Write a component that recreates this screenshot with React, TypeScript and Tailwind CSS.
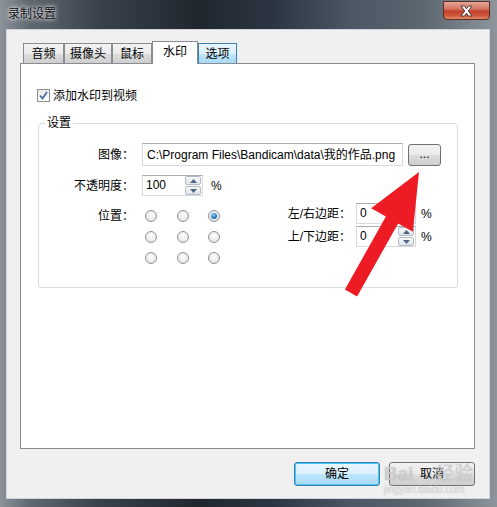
import React from "react";

const font = "font-['Liberation_Sans','Noto_Sans_CJK_SC',sans-serif]";

function SpinButtons() {
  return (
    <div className="flex flex-col w-[16px] h-[19px] gap-[1px]">
      <div className="flex-1 flex items-center justify-center border border-[#b4bac2] rounded-[2px] bg-[linear-gradient(#f6f7f8,#e2e5e9)]">
        <svg width="7" height="4" viewBox="0 0 7 4">
          <path d="M0 4 L3.5 0 L7 4 Z" fill="#4f648a" />
        </svg>
      </div>
      <div className="flex-1 flex items-center justify-center border border-[#b4bac2] rounded-[2px] bg-[linear-gradient(#f6f7f8,#e2e5e9)]">
        <svg width="7" height="4" viewBox="0 0 7 4">
          <path d="M0 0 L3.5 4 L7 0 Z" fill="#4f648a" />
        </svg>
      </div>
    </div>
  );
}

function SpinBox({ value, width }: { value: string; width: string }) {
  return (
    <div
      className={`flex items-center h-[21px] ${width} border border-[#d6dbe2] border-t-[#abadb3] bg-white pl-[3px] pr-[1px]`}
    >
      <span className="flex-1 leading-[19px]">{value}</span>
      <SpinButtons />
    </div>
  );
}

function Radio({ checked }: { checked?: boolean }) {
  return (
    <div className="w-[12px] h-[12px] rounded-full border border-[#8e9297] bg-[radial-gradient(circle_at_50%_40%,#ffffff,#dcdcdc)] flex items-center justify-center">
      {checked && (
        <div className="w-[6px] h-[6px] rounded-full bg-[radial-gradient(circle_at_40%_35%,#8fd3ff,#1f6fb5_60%,#0b3f73)]" />
      )}
    </div>
  );
}

const tabs = [
  { label: "音频", w: "w-[41px]" },
  { label: "摄像头", w: "w-[48px]" },
  { label: "鼠标", w: "w-[40px]" },
];

export default function App() {
  return (
    <div
      className={`relative w-[497px] h-[507px] overflow-hidden flex flex-col text-[12px] text-black ${font} bg-[linear-gradient(to_right,#8c939b_0%,#5f6770_6%,#39424c_20%,#1f262e_40%,#2c3642_55%,#4a5663_70%,#5c6670_85%,#8d949b_100%)]`}
    >
      {/* title bar */}
      <div className="h-[29px] flex items-start justify-between shrink-0">
        <div className="pl-[8px] pt-[7px] leading-[14px] text-[#0b0d10] [text-shadow:0_0_6px_rgba(255,255,255,0.9),0_0_3px_rgba(255,255,255,0.9)]">
          录制设置
        </div>
        <div className="mr-[7px] mt-[1px] w-[47px] h-[19px] rounded-b-[4px] border border-[#5b2d27] bg-[linear-gradient(#e7a597_0%,#d57663_40%,#c2412d_55%,#cf5a3e_80%,#e08a68_100%)] flex items-center justify-center">
          <svg width="15" height="12" viewBox="0 0 15 12">
            <path
              d="M2 1 L5.5 1 L7.5 3.8 L9.5 1 L13 1 L9.3 6 L13 11 L9.5 11 L7.5 8.2 L5.5 11 L2 11 L5.7 6 Z"
              fill="#ffffff"
              stroke="#4a3a38"
              strokeWidth="1"
            />
          </svg>
        </div>
      </div>

      {/* client */}
      <div className="flex-1 ml-[6px] mr-[7px] mb-[8px] border border-[#cfd5dc] bg-[#f0f0f0] flex flex-col pl-[13px] pt-[11px]">
        {/* tabs */}
        <div className="flex items-end h-[22px] pl-[3px]">
          {tabs.map((t) => (
            <div
              key={t.label}
              className={`${t.w} h-[20px] border border-b-0 border-[#898c95] bg-[linear-gradient(#f2f2f2,#ebebeb_50%,#dcdcdc_51%,#cfcfcf)] flex items-center justify-center leading-[14px]`}
            >
              {t.label}
            </div>
          ))}
          <div className="relative z-10 w-[46px] h-[23px] -mb-[1px] border border-b-0 border-[#898c95] bg-white flex items-center justify-center leading-[14px] pb-[2px]">
            水印
          </div>
          <div className="w-[39px] h-[20px] border border-b-0 border-[#3c7fb1] bg-[linear-gradient(#eaf6fd,#d9f0fc_50%,#bee6fd_51%,#a7d9f5)] flex items-center justify-center leading-[14px]">
            选项
          </div>
        </div>

        {/* panel */}
        <div className="w-[455px] h-[386px] border border-[#898c95] bg-white pl-[16px] pt-[25px]">
          <div className="flex items-center h-[13px] gap-[3px]">
            <div className="w-[13px] h-[13px] border border-[#8e8f8f] bg-[linear-gradient(#e8e8e8,#ffffff)] flex items-center justify-center">
              <svg width="9" height="9" viewBox="0 0 9 9">
                <path d="M1 4.5 L3.5 7.5 L8 1" fill="none" stroke="#4a6aa8" strokeWidth="1.8" />
              </svg>
            </div>
            <span className="leading-[14px]">添加水印到视频</span>
          </div>

          <fieldset className="mt-[14px] ml-[1px] w-[420px] h-[172px] border border-[#d5dfe5] rounded-[3px]">
            <legend className="ml-[6px] px-[2px] leading-[14px]">设置</legend>
            <div className="flex flex-col pt-[13px]">
              {/* image row */}
              <div className="flex items-center h-[23px]">
                <div className="w-[95px] text-right leading-[14px]">图像：</div>
                <div className="ml-[8px] w-[261px] h-[23px] border border-[#d6dbe2] border-t-[#abadb3] pl-[4px] flex items-center leading-[14px] whitespace-nowrap overflow-hidden">
                  C:\Program Files\Bandicam\data\我的作品.png
                </div>
                <div className="ml-[5px] w-[33px] h-[22px] rounded-[3px] border border-[#707070] bg-[linear-gradient(#f2f2f2,#ebebeb_50%,#dddddd_51%,#cfcfcf)] flex items-center justify-center leading-[10px] pb-[2px]">
                  ...
                </div>
              </div>

              {/* opacity row */}
              <div className="flex items-center h-[21px] mt-[9px]">
                <div className="w-[95px] text-right leading-[14px]">不透明度：</div>
                <div className="ml-[8px]">
                  <SpinBox value="100" width="w-[61px]" />
                </div>
                <span className="ml-[8px]">%</span>
              </div>

              {/* position row */}
              <div className="flex items-start mt-[7px]">
                <div className="flex items-start pt-[7px]">
                  <div className="w-[95px] text-right leading-[12px]">位置：</div>
                  <div className="ml-[11px] grid grid-cols-[12px_12px_12px] gap-x-[19.5px] gap-y-[9px]">
                    <Radio />
                    <Radio />
                    <Radio checked />
                    <Radio />
                    <Radio />
                    <Radio />
                    <Radio />
                    <Radio />
                    <Radio />
                  </div>
                </div>
                <div className="ml-[61px] flex flex-col gap-[2px]">
                  <div className="flex items-center h-[21px]">
                    <div className="w-[70px] text-right leading-[14px]">左/右边距：</div>
                    <div className="ml-[5px]">
                      <SpinBox value="0" width="w-[60px]" />
                    </div>
                    <span className="ml-[5px]">%</span>
                  </div>
                  <div className="flex items-center h-[21px]">
                    <div className="w-[70px] text-right leading-[14px]">上/下边距：</div>
                    <div className="ml-[5px]">
                      <SpinBox value="0" width="w-[60px]" />
                    </div>
                    <span className="ml-[5px]">%</span>
                  </div>
                </div>
              </div>
            </div>
          </fieldset>
        </div>

        {/* buttons */}
        <div className="w-[455px] flex justify-end gap-[9px] mt-[13px]">
          <div className="w-[86px] h-[24px] rounded-[3px] border border-[#3c7fb1] shadow-[inset_0_0_0_1px_#48c6f8] bg-[linear-gradient(#eaf6fd,#d9f0fc_50%,#bee6fd_51%,#a7d9f5)] flex items-center justify-center leading-[14px]">
            确定
          </div>
          <div className="w-[86px] h-[24px] rounded-[3px] border border-[#707070] bg-[linear-gradient(#f2f2f2,#ebebeb_50%,#dddddd_51%,#cfcfcf)] flex items-center justify-center leading-[14px]">
            取消
          </div>
        </div>
      </div>

      {/* baidu watermark */}
      <div className="absolute left-[384px] top-[464px] w-[100px] flex flex-col items-start pointer-events-none whitespace-nowrap">
        <div className="flex items-center text-[19px] leading-[20px] font-bold text-white/50 [text-shadow:0_0_1px_rgba(120,120,120,0.7)]">
          <span>Bai</span>
          <span className="ml-[22px] font-normal">经验</span>
        </div>
        <div className="text-[10px] leading-[12px] text-white/40 [text-shadow:0_0_1px_rgba(120,120,120,0.5)]">
          jingyan.baidu.com
        </div>
      </div>

      {/* red arrow */}
      <svg className="absolute left-0 top-0 pointer-events-none" width="497" height="507" viewBox="0 0 497 507">
        <polygon
          points="419,172 412.9,231.8 398.1,223.4 357.1,296.4 344.9,289.6 385.9,216.6 371.1,208.2"
          fill="#ed1c24"
        />
      </svg>
    </div>
  );
}
